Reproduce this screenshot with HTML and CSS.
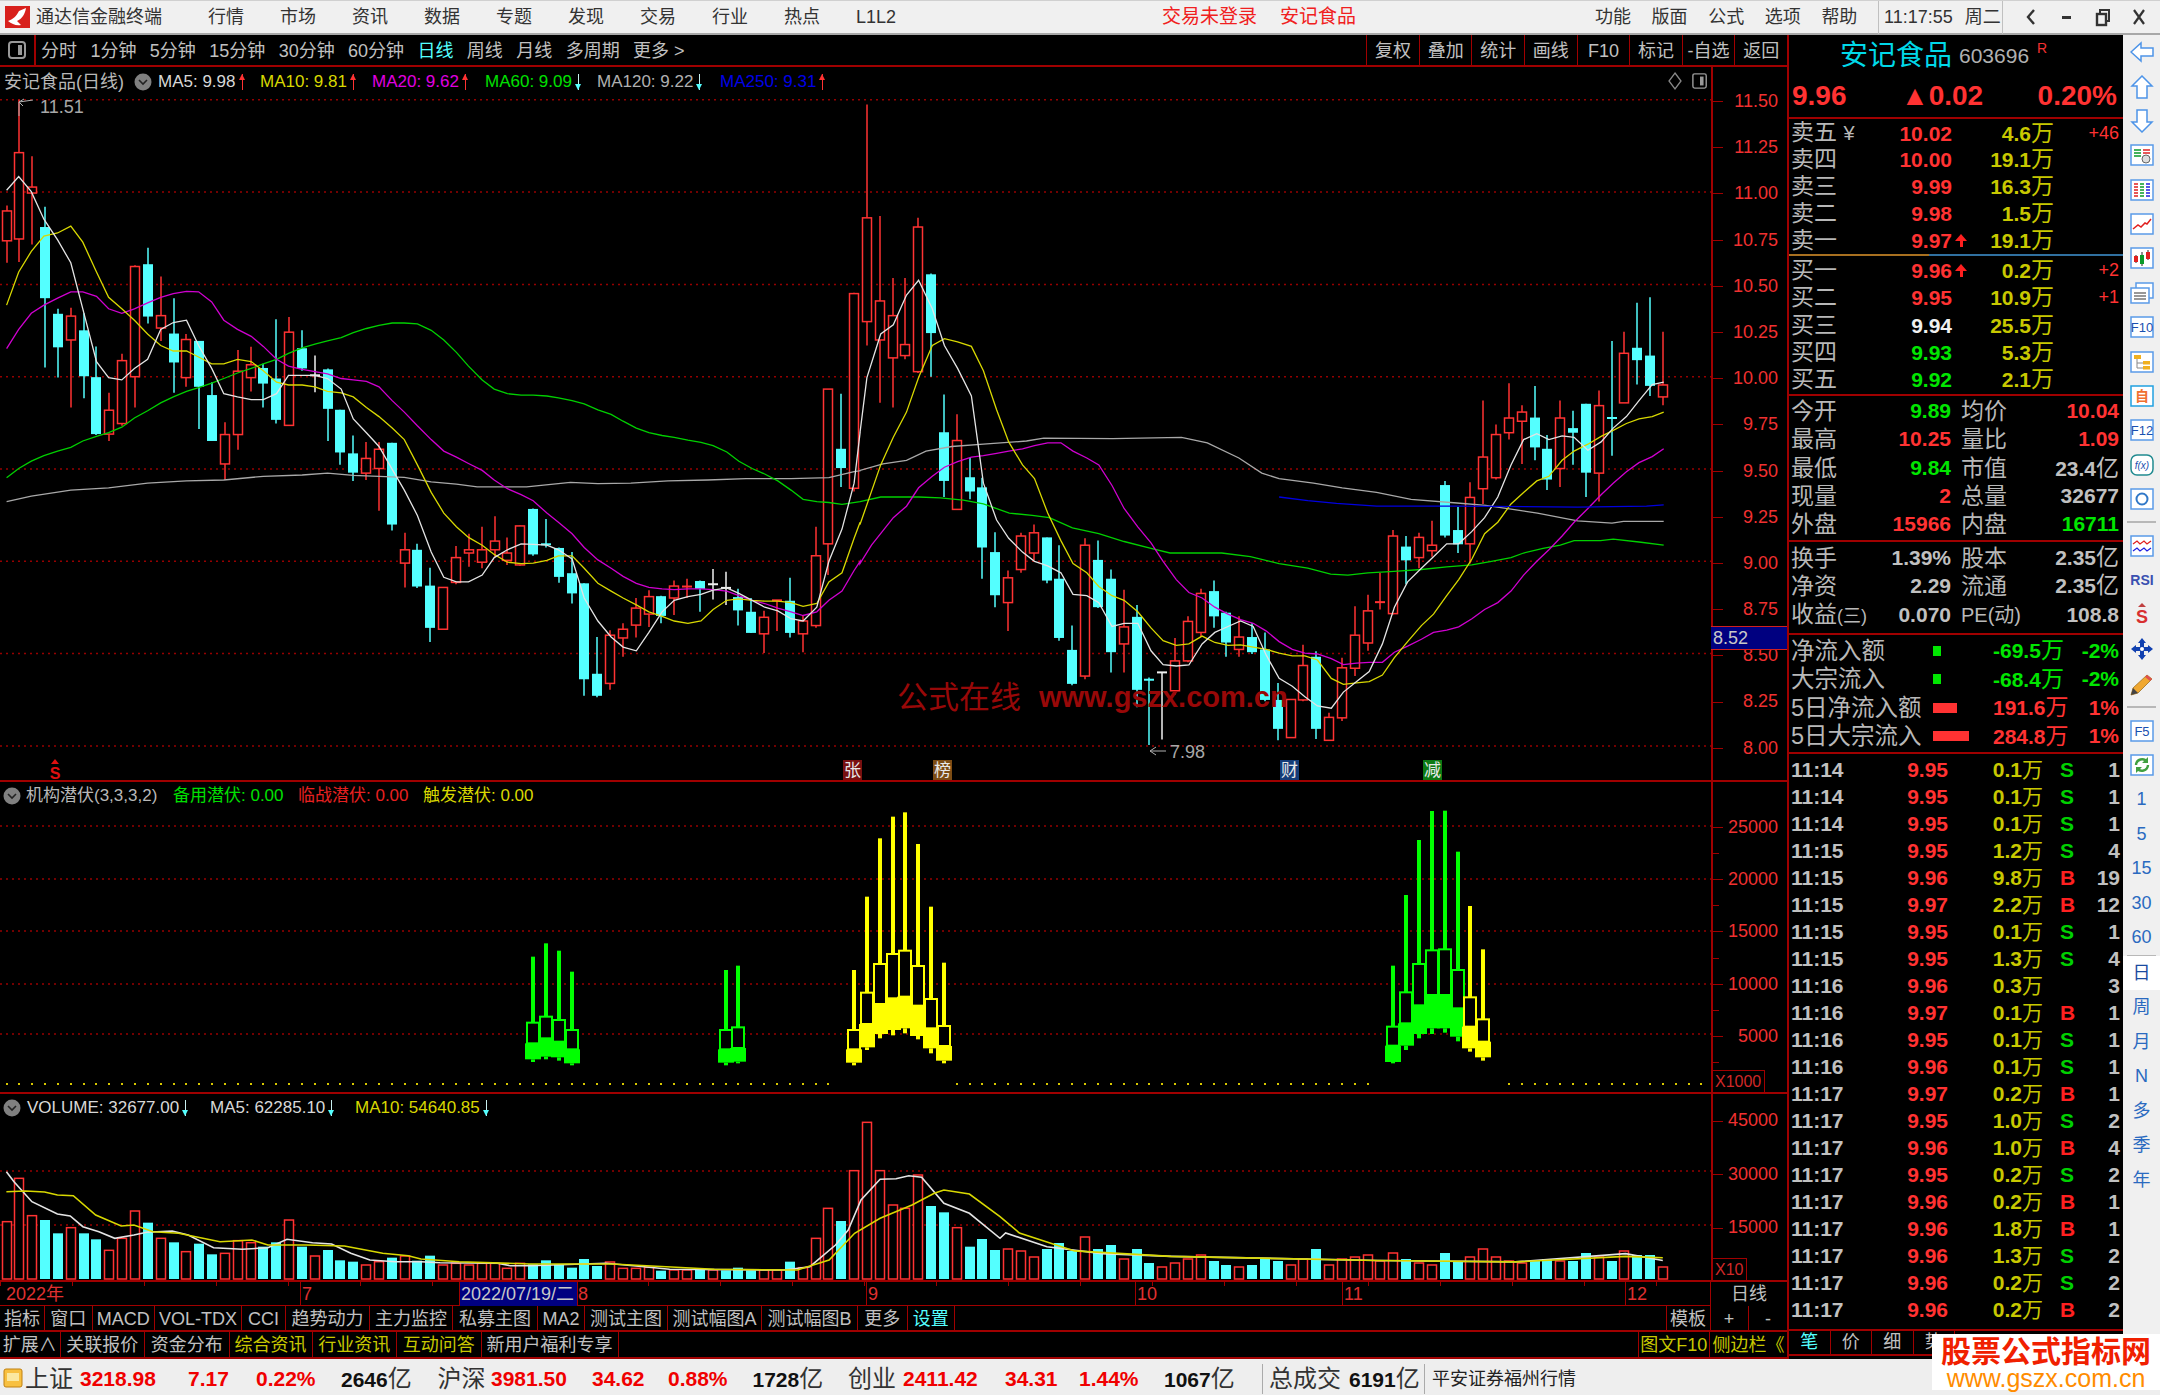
FILE: index.html
```html
<!DOCTYPE html>
<html lang="zh">
<head>
<meta charset="utf-8">
<title>通达信金融终端</title>
<link rel="stylesheet" href="styles.css">
</head>
<body>
<header class="titlebar">
  <svg class="logo" viewBox="0 0 25 22"><rect width="25" height="22" fill="#d8201c"/><path d="M3 15 C8 13 11 11 14 5 L21 2 C20 8 17 13 12 15 L16 19 C11 20 7 18 3 15Z" fill="#fff"/></svg>
  <span class="appname">通达信金融终端</span>
  <nav class="menu"><span>行情</span><span>市场</span><span>资讯</span><span>数据</span><span>专题</span><span>发现</span><span>交易</span><span>行业</span><span>热点</span><span>L1L2</span></nav>
  <span class="notice first">交易未登录</span><span class="notice">安记食品</span>
  <nav class="menu2"><span>功能</span><span>版面</span><span>公式</span><span>选项</span><span>帮助</span></nav>
  <span class="clock">11:17:55<span class="clock-day">周二</span></span>
  <span class="winbtns">
    <svg viewBox="0 0 16 20"><path d="M11 3 L5 10 L11 17" fill="none" stroke="#333" stroke-width="2.4"/></svg>
    <svg viewBox="0 0 16 20"><rect x="3" y="9" width="9" height="3" fill="#333"/></svg>
    <svg viewBox="0 0 16 20"><rect x="5" y="3" width="9" height="11" fill="none" stroke="#333" stroke-width="2"/><rect x="2" y="7" width="9" height="11" fill="#f0f0f0" stroke="#333" stroke-width="2.4"/></svg>
    <svg viewBox="0 0 16 20"><path d="M3 3 L13 17 M13 3 L3 17" stroke="#333" stroke-width="2.2"/></svg>
  </span>
</header>

<main class="main">
  <section class="left">
    <div class="toolbar">
      <span class="tool-icon"><svg viewBox="0 0 20 20"><rect x="2" y="2" width="16" height="16" rx="3" fill="none" stroke="#999" stroke-width="2"/><rect x="11" y="5" width="4" height="10" fill="#999"/></svg></span>
      <div class="periods"><span>分时</span><span>1分钟</span><span>5分钟</span><span>15分钟</span><span>30分钟</span><span>60分钟</span><span class="cyan">日线</span><span>周线</span><span>月线</span><span>多周期</span><span>更多 &gt;</span></div>
      <div class="toolbtns"><span>复权</span><span>叠加</span><span>统计</span><span>画线</span><span>F10</span><span>标记</span><span>-自选</span><span>返回</span></div>
    </div>

    <div class="pane pane-main">
      <div class="plot">
        <svg id="chart-main" class="chart" viewBox="0 67 1711 715"></svg>
        <div class="legend legend-main">
          <span class="gray name">安记食品(日线)</span>
          <svg class="drop" viewBox="0 0 18 18"><circle cx="9" cy="9" r="8.5" fill="#808080"/><path d="M5 7 L9 11 L13 7" fill="none" stroke="#222" stroke-width="1.6"/></svg>
          <span class="lwhite">MA5: 9.98<i class="up"></i></span>
          <span class="lyellow">MA10: 9.81<i class="up"></i></span>
          <span class="lmag">MA20: 9.62<i class="up"></i></span>
          <span class="lgreen">MA60: 9.09<i class="down"></i></span>
          <span class="lgray">MA120: 9.22<i class="down"></i></span>
          <span class="lblue">MA250: 9.31<i class="up"></i></span>
        </div>
        <div class="plot-tools">
          <svg viewBox="0 0 14 20"><path d="M7 2 L13 10 L7 18 L1 10Z" fill="none" stroke="#888" stroke-width="1.3"/></svg>
          <svg viewBox="0 0 18 20"><rect x="1" y="2" width="15" height="16" rx="2" fill="none" stroke="#999" stroke-width="1.6"/><rect x="9" y="5" width="4" height="10" fill="#999"/></svg>
        </div>
      </div>
      <ul class="axis axis-main"><li>11.50</li><li>11.25</li><li>11.00</li><li>10.75</li><li>10.50</li><li>10.25</li><li>10.00</li><li>9.75</li><li>9.50</li><li>9.25</li><li>9.00</li><li>8.75</li><li>8.50</li><li>8.25</li><li>8.00</li></ul>
      <span class="pricetag">8.52</span>
    </div>

    <div class="pane pane-ind">
      <div class="plot">
        <svg id="chart-ind" class="chart" viewBox="0 782 1711 312"></svg>
        <div class="legend legend-ind">
          <svg class="drop" viewBox="0 0 18 18"><circle cx="9" cy="9" r="8.5" fill="#808080"/><path d="M5 7 L9 11 L13 7" fill="none" stroke="#222" stroke-width="1.6"/></svg>
          <span class="gray">机构潜伏(3,3,3,2)</span>
          <span class="lgreen">备用潜伏: 0.00</span>
          <span class="lred">临战潜伏: 0.00</span>
          <span class="lyellow">触发潜伏: 0.00</span>
        </div>
      </div>
      <ul class="axis axis-ind"><li>25000</li><li>20000</li><li>15000</li><li>10000</li><li>5000</li></ul>
      <span class="unit unit-1000">X1000</span>
    </div>

    <div class="pane pane-vol">
      <div class="plot">
        <svg id="chart-vol" class="chart" viewBox="0 1094 1711 186"></svg>
        <div class="legend legend-vol">
          <svg class="drop" viewBox="0 0 18 18"><circle cx="9" cy="9" r="8.5" fill="#808080"/><path d="M5 7 L9 11 L13 7" fill="none" stroke="#222" stroke-width="1.6"/></svg>
          <span class="lwhite">VOLUME: 32677.00<i class="down"></i></span>
          <span class="lwhite">MA5: 62285.10<i class="down"></i></span>
          <span class="lyellow">MA10: 54640.85<i class="down"></i></span>
        </div>
      </div>
      <ul class="axis axis-vol"><li>45000</li><li>30000</li><li>15000</li></ul>
      <span class="unit unit-10">X10</span>
    </div>

    <div class="timeaxis">
      <span class="t-first">2022年</span><span>7</span><span class="t-date">2022/07/19/二</span><span class="t-cut">8</span><span>9</span><span>10</span><span>11</span><span>12</span><span class="t-cell">日线</span>
    </div>
    <div class="btnrow row1">
      <span>指标</span><span>窗口</span><span>MACD</span><span>VOL-TDX</span><span>CCI</span><span>趋势动力</span><span>主力监控</span><span>私募主图</span><span>MA2</span><span>测试主图</span><span>测试幅图A</span><span>测试幅图B</span><span>更多</span><span class="cyan">设置</span>
      <em></em><span class="c-left">模板</span><span>+</span><span>-</span>
    </div>
    <div class="btnrow row2">
      <span>扩展∧</span><span>关联报价</span><span>资金分布</span><span class="olive">综合资讯</span><span class="olive">行业资讯</span><span class="olive">互动问答</span><span>新用户福利专享</span>
      <em></em><span class="olive c-left">图文F10</span><span class="olive">侧边栏《</span>
    </div>
  </section>

  <aside class="quote">
    <div class="q-head">
      <div class="q-title"><span class="q-name">安记食品</span><span class="q-code">603696</span><sup class="q-r">R</sup></div>
      <div class="q-price"><span>9.96</span><span>▲0.02</span><span>0.20%</span></div>
    </div>
    <div class="book sell">
      <div class="b-row"><span class="lab">卖五 <small>¥</small></span><span class="red">10.02</span><i></i><span class="vol">4.6<u>万</u></span><span class="red delta">+46</span></div>
      <div class="b-row"><span class="lab">卖四</span><span class="red">10.00</span><i></i><span class="vol">19.1<u>万</u></span><span></span></div>
      <div class="b-row"><span class="lab">卖三</span><span class="red">9.99</span><i></i><span class="vol">16.3<u>万</u></span><span></span></div>
      <div class="b-row"><span class="lab">卖二</span><span class="red">9.98</span><i></i><span class="vol">1.5<u>万</u></span><span></span></div>
      <div class="b-row"><span class="lab">卖一</span><span class="red">9.97</span><i class="barrow"></i><span class="vol">19.1<u>万</u></span><span></span></div>
    </div>
    <div class="book-div"></div>
    <div class="book buy">
      <div class="b-row"><span class="lab">买一</span><span class="red">9.96</span><i class="barrow"></i><span class="vol">0.2<u>万</u></span><span class="red delta">+2</span></div>
      <div class="b-row"><span class="lab">买二</span><span class="red">9.95</span><i></i><span class="vol">10.9<u>万</u></span><span class="red delta">+1</span></div>
      <div class="b-row"><span class="lab">买三</span><span class="white">9.94</span><i></i><span class="vol">25.5<u>万</u></span><span></span></div>
      <div class="b-row"><span class="lab">买四</span><span class="green">9.93</span><i></i><span class="vol">5.3<u>万</u></span><span></span></div>
      <div class="b-row"><span class="lab">买五</span><span class="green">9.92</span><i></i><span class="vol">2.1<u>万</u></span><span></span></div>
    </div>
    <div class="stats">
      <div class="s-row"><span class="lab">今开</span><span class="green">9.89</span><span class="lab">均价</span><span class="red">10.04</span></div>
      <div class="s-row"><span class="lab">最高</span><span class="red">10.25</span><span class="lab">量比</span><span class="red">1.09</span></div>
      <div class="s-row"><span class="lab">最低</span><span class="green">9.84</span><span class="lab">市值</span><span class="gr">23.4<u>亿</u></span></div>
      <div class="s-row"><span class="lab">现量</span><span class="red">2</span><span class="lab">总量</span><span class="gr">32677</span></div>
      <div class="s-row"><span class="lab">外盘</span><span class="red">15966</span><span class="lab">内盘</span><span class="green">16711</span></div>
    </div>
    <div class="stats stats2">
      <div class="s-row"><span class="lab">换手</span><span class="gr">1.39%</span><span class="lab">股本</span><span class="gr">2.35<u>亿</u></span></div>
      <div class="s-row"><span class="lab">净资</span><span class="gr">2.29</span><span class="lab">流通</span><span class="gr">2.35<u>亿</u></span></div>
      <div class="s-row"><span class="lab">收益<small class="paren">(三)</small></span><span class="gr">0.070</span><span class="lab pe">PE(动)</span><span class="gr">108.8</span></div>
    </div>
    <div class="flow">
      <div class="f-row"><span class="lab">净流入额</span><b class="bar-s"></b><span class="green">-69.5<u>万</u></span><span class="green">-2%</span></div>
      <div class="f-row"><span class="lab">大宗流入</span><b class="bar-s"></b><span class="green">-68.4<u>万</u></span><span class="green">-2%</span></div>
      <div class="f-row"><span class="lab">5日净流入额</span><b class="bar-m"></b><span class="red">191.6<u>万</u></span><span class="red">1%</span></div>
      <div class="f-row"><span class="lab">5日大宗流入</span><b class="bar-l"></b><span class="red">284.8<u>万</u></span><span class="red">1%</span></div>
    </div>
    <div class="ticks" id="ticks"></div>
    <div class="qtabs"><span class="cyan">笔</span><span>价</span><span>细</span><span>势</span></div>
  </aside>

  <nav class="sidebar">
    <svg viewBox="0 0 24 24"><path d="M1 12 L11 3 L11 8 L23 8 L23 16 L11 16 L11 21Z" fill="#fff" stroke="#4d94e8" stroke-width="1.5"/></svg>
    <svg viewBox="0 0 24 24"><path d="M12 1 L22 11 L17 11 L17 23 L7 23 L7 11 L2 11Z" fill="#fff" stroke="#4d94e8" stroke-width="1.5"/></svg>
    <svg viewBox="0 0 24 24"><path d="M12 23 L22 13 L17 13 L17 1 L7 1 L7 13 L2 13Z" fill="#fff" stroke="#4d94e8" stroke-width="1.5"/></svg>
    <svg viewBox="0 0 24 24"><rect class="ib" x="1" y="2" width="22" height="20"/><path d="M4 7h7M4 10h7M4 13h7" stroke="#0a9a2a" stroke-width="1.5"/><path d="M13 7h7M13 10h7" stroke="#e02020" stroke-width="1.5"/><circle cx="16" cy="16" r="4" fill="#ddd" stroke="#666"/></svg>
    <svg viewBox="0 0 24 24"><rect class="ib" x="1" y="2" width="22" height="20"/><path d="M4 6h4M4 9h4M4 12h4M4 15h4M4 18h4" stroke="#e02020" stroke-width="1.5"/><path d="M10 6h4M10 9h4M10 12h4M10 15h4M10 18h4" stroke="#0a9a2a" stroke-width="1.5"/><path d="M16 6h4M16 9h4M16 12h4M16 15h4M16 18h4" stroke="#2020e0" stroke-width="1.5"/></svg>
    <svg viewBox="0 0 24 24"><rect class="ib" x="1" y="2" width="22" height="20"/><path d="M3 17 L8 13 L11 15 L15 11 L17 12 L21 7" fill="none" stroke="#e02020" stroke-width="1.5"/></svg>
    <svg viewBox="0 0 24 24"><rect class="ib" x="1" y="2" width="22" height="20"/><path d="M6 9v8M12 6v14M18 4v10" stroke="#222" stroke-width="1"/><rect x="4" y="10" width="4" height="6" fill="#e02020"/><rect x="10" y="9" width="4" height="9" fill="#0a9a2a"/><rect x="16" y="6" width="4" height="7" fill="#e02020"/></svg>
    <svg viewBox="0 0 24 24"><rect x="6" y="2" width="17" height="15" fill="#fff" stroke="#5a9ae8" stroke-width="1.5"/><rect class="ib" x="1" y="7" width="18" height="15"/><path d="M4 12h12M4 15h12M4 18h12" stroke="#777" stroke-width="1.4"/></svg>
    <svg viewBox="0 0 24 24"><rect class="ib" x="1" y="2" width="22" height="20"/><text x="12" y="17" class="ifont">F10</text></svg>
    <svg viewBox="0 0 24 24"><rect class="ib" x="1" y="2" width="22" height="20"/><rect x="4" y="5" width="7" height="4" fill="#f0b020"/><path d="M7 9v9h6M7 13h6" fill="none" stroke="#888"/><rect x="13" y="11" width="7" height="3.5" fill="#f0b020"/><rect x="13" y="16" width="7" height="3.5" fill="#f0b020"/></svg>
    <svg viewBox="0 0 24 24"><rect x="1" y="2" width="22" height="20" fill="#fff" stroke="#20a0e0" stroke-width="1.5"/><text x="12" y="17" class="ifont ifont-o">自</text></svg>
    <svg viewBox="0 0 24 24"><rect class="ib" x="1" y="2" width="22" height="20"/><text x="12" y="17" class="ifont">F12</text></svg>
    <svg viewBox="0 0 24 24"><rect x="1" y="2" width="22" height="20" rx="6" fill="#fff" stroke="#208a90" stroke-width="1.5"/><text x="12" y="16" class="ifont ifont-f">f(x)</text></svg>
    <svg viewBox="0 0 24 24"><rect class="ib" x="1" y="2" width="22" height="20"/><circle cx="12" cy="12" r="5.5" fill="none" stroke="#3078c8" stroke-width="2"/></svg>
    <hr>
    <svg viewBox="0 0 24 24"><rect class="ib" x="1" y="2" width="22" height="20"/><path d="M3 10 L7 7 L10 10 L14 7 L17 10 L21 7" fill="none" stroke="#e02020" stroke-width="1.3"/><path d="M3 17 L7 14 L10 17 L14 14 L17 17 L21 14" fill="none" stroke="#2020e0" stroke-width="1.3"/></svg>
    <svg viewBox="0 0 24 24"><text x="12" y="17" class="ifont ifont-rsi">RSI</text></svg>
    <svg viewBox="0 0 24 24"><path d="M12 0 L16 4 H8Z" fill="#c04040"/><text x="12" y="20" class="ifont ifont-s">S</text></svg>
    <svg viewBox="0 0 24 24"><path d="M12 1 L16 6 H14 V10 H18 V8 L23 12 L18 16 V14 H14 V18 H16 L12 23 L8 18 H10 V14 H6 V16 L1 12 L6 8 V10 H10 V6 H8Z" fill="#1040b0"/><circle cx="12" cy="12" r="2" fill="#fff"/></svg>
    <svg viewBox="0 0 24 24"><path d="M1 23 L3 16 L17 3 L22 7 L8 21Z" fill="#f0a830" stroke="#a07020" stroke-width=".8"/><path d="M17 3 L22 7 L20 9 L15 5Z" fill="#e05050"/><path d="M1 23 L3 16 L8 21Z" fill="#444"/></svg>
    <hr>
    <svg viewBox="0 0 24 24"><rect class="ib" x="1" y="2" width="22" height="20"/><text x="12" y="17" class="ifont">F5</text></svg>
    <svg viewBox="0 0 24 24"><rect class="ib" x="1" y="2" width="22" height="20"/><path d="M6 12 A6 6 0 0 1 17 9 M18 12 A6 6 0 0 1 7 15" fill="none" stroke="#40a040" stroke-width="2.4"/><path d="M18 4 V10 H12Z M6 20 V14 H12Z" fill="#40a040"/></svg>
    <span>1</span><span>5</span><span>15</span><span>30</span><span>60</span>
    <hr class="thin">
    <span class="active">日</span><span>周</span><span>月</span><span>N</span><span>多</span><span>季</span><span>年</span>
  </nav>
</main>

<footer class="status">
  <svg class="st-icon" viewBox="0 0 20 20"><rect x="1" y="1" width="18" height="18" rx="2" fill="#f8c040" stroke="#c08010"/><rect x="4" y="5" width="12" height="8" fill="#fbe8a0"/></svg>
  <span class="st-lab">上证</span><span class="st-red">3218.98</span><span class="st-red">7.17</span><span class="st-red">0.22%</span><span class="st-amt">2646<u>亿</u></span>
  <span class="st-lab">沪深</span><span class="st-red">3981.50</span><span class="st-red">34.62</span><span class="st-red">0.88%</span><span class="st-amt">1728<u>亿</u></span>
  <span class="st-lab">创业</span><span class="st-red">2411.42</span><span class="st-red">34.31</span><span class="st-red">1.44%</span><span class="st-amt">1067<u>亿</u></span>
  <span class="st-lab st-sep">总成交</span><span class="st-amt">6191<u>亿</u></span><span class="st-broker">平安证券福州行情</span>
</footer>

<aside class="stamp"><strong>股票公式指标网</strong><span>www.gszx.com.cn</span></aside>
<script src="chart.js"></script>
</body>
</html>
```

FILE: styles.css
```css
* { box-sizing: border-box; }
html, body { margin: 0; padding: 0; }
body {
  position: relative;
  width: 2160px;
  height: 1395px;
  overflow: hidden;
  background: #000;
  color: #c0c0c0;
  font-family: "Liberation Sans", "Noto Sans CJK SC", sans-serif;
  font-size: 18px;
}
u { text-decoration: none; font-weight: 400; }
i { font-style: normal; }
.cyan { color: #54ffff; }
.olive { color: #c8c800; }

/* title bar */
.titlebar {
  height: 35px;
  display: flex;
  align-items: center;
  background: #f0f0f0;
  border-top: 1px solid #d0d0d0;
  border-bottom: 2px solid #a8a8a8;
  color: #333;
  font-size: 18px;
  line-height: 32px;
}
.logo { width: 25px; height: 22px; margin-left: 5px; }
.appname { margin-left: 6px; width: 172px; }
.menu { display: flex; width: 954px; }
.menu span { width: 72px; }
.notice { color: #f02020; font-size: 19px; width: 122px; }
.notice.first { width: 118px; }
.notice + .notice { width: 315px; }
.menu2 { display: flex; width: 283px; }
.menu2 span { width: 57px; }
.clock {
  display: flex;
  align-items: center;
  height: 33px;
  width: 125px;
  padding-left: 5px;
  border-left: 1px solid #c0c0c0;
  border-right: 1px solid #c0c0c0;
  font-size: 18px;
  white-space: nowrap;
}
.clock-day { margin-left: 12px; font-size: 18px; }
.winbtns { display: flex; gap: 20px; margin-left: 20px; }
.winbtns svg { width: 16px; height: 20px; }

/* layout */
.main { display: flex; height: 1324px; }
.left { width: 1787px; display: flex; flex-direction: column; }

.toolbar {
  height: 32px;
  display: flex;
  align-items: center;
  border-bottom: 2px solid #a00000;
  line-height: 28px;
}
.tool-icon {
  width: 36px; height: 30px;
  display: flex; align-items: center; justify-content: center;
  border-right: 2px solid #a00000;
}
.tool-icon svg { width: 20px; height: 20px; }
.periods { display: flex; gap: 13.4px; margin-left: 5px; padding-top: 2px; }
.toolbtns { display: flex; margin-left: auto; }
.toolbtns span {
  width: 52.6px; height: 30px;
  padding-top: 2px;
  text-align: center;
  border-left: 1px solid #a00000;
}

/* panes */
.pane { position: relative; display: flex; border-bottom: 2px solid #a00000; }
.pane-main { height: 715px; }
.pane-ind { height: 312px; }
.pane-vol { height: 188px; }
.plot { position: relative; width: 1711px; }
.chart { position: absolute; left: 0; top: 0; width: 1711px; display: block; }
.pane-main .chart { height: 715px; }
.pane-ind .chart { height: 312px; }
.pane-vol .chart { height: 186px; }

.legend {
  position: absolute;
  left: 0;
  display: grid;
  align-items: center;
  white-space: nowrap;
  font-size: 17px;
  line-height: 22px;
}
.legend-main { top: 4px; padding-left: 4px; grid-template-columns: 130px 24px 102px 112px 113px 112px 123px auto; }
.legend-ind { top: 3px; padding-left: 3px; grid-template-columns: 23px 147px 125px 125px auto; }
.legend-vol { top: 3px; padding-left: 3px; grid-template-columns: 24px 183px 145px auto; }
.name { font-size: 18px; }
.gray { color: #b8b8b8; }
.drop { width: 18px; height: 18px; display: block; }
.lwhite { color: #d8d8d8; }
.lyellow { color: #d8d800; }
.lmag { color: #e000e0; }
.lgreen { color: #00e000; }
.lgray { color: #b0b0b0; }
.lblue { color: #0000e8; }
.lred { color: #e82020; }

/* trend arrows beside the moving-average values */
.up, .down {
  position: relative;
  display: inline-block;
  width: 7px;
  height: 16px;
  margin-left: 3px;
  vertical-align: -3px;
}
.up::before, .down::before {
  content: "";
  position: absolute;
  left: 3px; top: 0;
  width: 1px; height: 16px;
}
.up::after, .down::after {
  content: "";
  position: absolute;
  left: 0;
  border-left: 3.5px solid transparent;
  border-right: 3.5px solid transparent;
}
.up::before { background: #ff3232; }
.up::after { top: 0; border-bottom: 6px solid #ff3232; }
.down::before { background: #c8f0f0; }
.down::after { bottom: 0; border-top: 6px solid #54ffff; }

.plot-tools { position: absolute; right: 3px; top: 4px; display: flex; gap: 9px; }
.plot-tools svg { height: 20px; width: 16px; }

.axis {
  list-style: none;
  margin: 0;
  padding: 0 9px 0 0;
  width: 76px;
  border-left: 2px solid #a00000;
  color: #f03030;
  text-align: right;
}
.axis li { position: relative; }
.axis li::before {
  content: "";
  position: absolute;
  left: 0; top: 50%;
  width: 10px; height: 1px;
  background: #a00000;
}
.axis-main { padding-top: 11px; }
.axis-main li { height: 46.2px; line-height: 46.2px; }
.axis-ind { padding-top: 19px; }
.axis-ind li { height: 52.2px; line-height: 52.2px; }
.axis-ind li::after {
  content: "";
  position: absolute;
  left: 0; top: 100%;
  width: 6px; height: 1px;
  background: #a00000;
}
.axis-vol li { height: 53.5px; line-height: 53.5px; }
.pricetag {
  position: absolute;
  left: 1711px; top: 559px;
  width: 76px; height: 24px;
  padding-left: 2px;
  background: #000080;
  border-top: 1px solid #d02020;
  border-bottom: 1px solid #d02020;
  color: #c8c8c8;
  line-height: 22px;
}
.unit {
  position: absolute;
  bottom: 0;
  left: 1711px;
  height: 22px;
  padding: 0 3px;
  border: 1px solid #a00000;
  border-bottom: 0;
  color: #d02828;
  font-size: 16px;
  line-height: 22px;
}

/* time axis and button rows */
.timeaxis {
  height: 24px;
  display: grid;
  grid-template-columns: 300px 159px 118px 289px 269px 207px 283px 85px 77px;
  border-bottom: 1px solid #a00000;
  color: #e03030;
  line-height: 23px;
  background: repeating-linear-gradient(90deg, #a00000 0 1px, transparent 1px 72px) top left / 100% 4px no-repeat;
}
.timeaxis span { padding-left: 1px; padding-top: 1px; border-left: 1px solid #a00000; }
.timeaxis .t-first { border-left: 0; padding-left: 6px; }
.t-date { background: #000080; color: #c8c8c8; white-space: nowrap; overflow: hidden; }
.timeaxis .t-cut { padding-left: 0; }
.timeaxis .t-cell { background: #000; color: #c0c0c0; text-align: center; padding-left: 0; }

.btnrow { display: grid; text-align: center; white-space: nowrap; border-bottom: 2px solid #a00000; }
.btnrow span { border-right: 1px solid #a00000; padding-top: 2px; }
.row1 {
  height: 26px; line-height: 22px;
  grid-template-columns: 45px 47.5px 62.5px 87px 44px 84px 83px 85px 47px 83px 94px 96px 49.5px 47.5px 710.5px 45px 38px 39px;
}
.row2 {
  height: 27px; line-height: 23px;
  grid-template-columns: 60.6px 84.4px 84.6px 83px 84.5px 84.5px 137px 1019px 72.4px 77px;
}
.btnrow em { border-right: 0; }
.c-left { border-left: 1px solid #a00000; }
.btnrow span:last-child { border-right: 0; }

/* quote panel */
.quote {
  width: 336px;
  display: flex;
  flex-direction: column;
  border-left: 2px solid #a00000;
}
.q-head { height: 84px; border-bottom: 2px solid #a00000; }
.q-title { height: 41px; display: flex; align-items: center; padding-left: 51px; }
.q-name { color: #00d8e8; font-size: 28px; line-height: 40px; }
.q-code { color: #b0b0b0; font-size: 21px; margin-left: 7px; }
.q-r { color: #f03030; font-size: 14px; margin: -16px 0 0 8px; }
.q-price {
  display: flex;
  justify-content: space-between;
  padding: 0 6px 0 3px;
  color: #ff3232;
  font-size: 28px;
  font-weight: 700;
  line-height: 40px;
}
.red { color: #ff3232; font-weight: 700; }
.green { color: #00e600; font-weight: 700; }
.white { color: #f0f0f0; font-weight: 700; }
.gr { color: #c0c0c0; font-weight: 700; }
.lab { color: #b8b8b8; font-size: 23px; white-space: nowrap; font-weight: 400; }
.lab small { font-size: 20px; }
.lab small.paren { font-size: 18px; }

.book { font-size: 21px; }
.sell { height: 135px; }
.buy { height: 138px; padding-top: 1px; }
.book-div { height: 2px; background: linear-gradient(90deg, #a87020 0 140px, #3070a0 140px); }
.b-row {
  height: 27.3px;
  display: grid;
  grid-template-columns: 62px 99px 18px 84px 65px;
  align-items: center;
  padding-left: 2px;
  line-height: 27px;
}
.sell .b-row { height: 27px; }
.b-row > span:nth-child(2) { text-align: right; }
.barrow { position: relative; height: 14px; }
.barrow::before {
  content: "";
  position: absolute;
  left: 3px; top: 0;
  border-left: 6px solid transparent;
  border-right: 6px solid transparent;
  border-bottom: 7px solid #ff2020;
}
.barrow::after {
  content: "";
  position: absolute;
  left: 7.5px; top: 6px;
  width: 3px; height: 7px;
  background: #ff2020;
}
.vol { color: #c8c800; text-align: right; white-space: nowrap; font-weight: 700; }
.vol u { font-size: 23px; }
.delta { text-align: right; font-size: 18px; font-weight: 400; }

.stats { height: 146px; border-top: 2px solid #a00000; font-size: 21px; padding-top: 1px; line-height: 28px; }
.stats2 { height: 93px; }
.s-row {
  height: 28.3px;
  display: grid;
  grid-template-columns: 160px 10px 72px 86px;
  align-items: center;
  padding-left: 2px;
}
.s-row > span:nth-child(1) { grid-column: 1; grid-row: 1; }
.s-row > span:nth-child(2) { grid-column: 1; grid-row: 1; text-align: right; }
.s-row > span:nth-child(3) { grid-column: 3; grid-row: 1; }
.s-row > span:nth-child(4) { grid-column: 3 / 5; grid-row: 1; text-align: right; }
.s-row u { font-size: 23px; }
.lab.pe { font-size: 20px; }

.flow { height: 119px; border-top: 2px solid #a00000; font-size: 21px; padding-top: 1px; line-height: 28px; }
.f-row {
  height: 28.6px;
  display: grid;
  grid-template-columns: 142px 60px 64px 62px;
  align-items: center;
  padding-left: 2px;
}
.f-row .lab { font-size: 23.5px; }
.f-row > span:nth-child(3) { text-align: right; white-space: nowrap; }
.f-row > span:nth-child(4) { text-align: right; }
.f-row u { font-size: 23px; }
.bar-s, .bar-m, .bar-l { height: 10px; display: block; }
.bar-s { width: 8px; background: #00e600; }
.bar-m { width: 24px; background: #ff3232; }
.bar-l { width: 36px; background: #ff3232; }

.ticks { height: 577px; border-top: 2px solid #a00000; padding-top: 2px; font-size: 21px; }
.t-row {
  height: 27px;
  display: grid;
  grid-template-columns: 60px 97px 95px 30px 47px;
  align-items: center;
  padding-left: 2px;
  line-height: 27px;
  font-weight: 700;
}
.t-row span:nth-child(2), .t-row span:nth-child(3), .t-row span:nth-child(5) { text-align: right; }
.t-row span:nth-child(3) { color: #c8c800; white-space: nowrap; }
.t-row span:nth-child(4) { padding-left: 17px; }
.t-s { color: #00d000; }
.t-b { color: #ff2020; }
.qtabs {
  height: 27px;
  display: flex;
  border-top: 2px solid #a00000;
  border-bottom: 2px solid #a00000;
  line-height: 23px;
}
.qtabs span { width: 41.5px; text-align: center; border-right: 1px solid #a00000; }

/* right icon column */
.sidebar {
  width: 37px;
  display: flex;
  flex-direction: column;
  align-items: center;
  background: #f0f0f0;
  color: #2a6ac0;
  font-size: 18px;
}
.sidebar svg { width: 24px; height: 24px; margin: 5.2px 0; flex: none; }
.sidebar span { height: 34.5px; line-height: 34.5px; flex: none; width: 100%; text-align: center; }
.sidebar .active { background: #fff; color: #1a4aa0; }
.sidebar hr { width: 29px; height: 2px; margin: 5px 0 5.6px; border: 0; background: #b8b8b8; flex: none; }
.sidebar hr.thin { height: 1px; margin: 0; }
.ib { fill: #fff; stroke: #5a9ae8; stroke-width: 1.5; }
.ifont { font-family: "Liberation Sans", sans-serif; font-size: 13px; fill: #1a50b0; text-anchor: middle; }
.ifont-o { font-family: "Noto Sans CJK SC", sans-serif; font-size: 14px; fill: #f07030; font-weight: 700; }
.ifont-f { font-size: 10px; font-style: italic; }
.ifont-rsi { font-size: 14px; font-weight: 700; fill: #3a50b0; }
.ifont-s { font-size: 18px; font-weight: 700; fill: #d83030; }

/* status bar */
.status {
  height: 36px;
  display: grid;
  grid-template-columns: 25px 55px 108px 68px 85px 96.5px 53.5px 101px 76px 84.5px 95.5px 55px 102px 74px 85px 98px 87px 75px auto;
  align-items: center;
  background: #eeeeee;
  color: #222;
  font-size: 21px;
  white-space: nowrap;
  line-height: 30px;
  padding-top: 4px;
}
.st-icon { width: 20px; height: 20px; margin-left: 3px; margin-top: -2px; }
.st-lab { font-size: 24px; color: #333; }
.st-red { color: #f00000; font-weight: 700; }
.st-amt { color: #111; font-weight: 700; }
.st-amt u { font-size: 24px; font-weight: 400; color: #333; }
.st-sep { border-left: 1px solid #aaa; padding-left: 6px; }
.st-broker { font-size: 18px; border-left: 1px solid #aaa; padding-left: 7px; }

/* watermark box */
.stamp {
  position: absolute;
  left: 1932px; top: 1334px;
  width: 228px; height: 56px;
  padding-top: 2px;
  background: #fff;
  display: flex;
  flex-direction: column;
  align-items: center;
}
.stamp strong { color: #f02000; font-size: 30px; line-height: 31px; }
.stamp span { color: #ff8c00; font-size: 25px; line-height: 23px; white-space: nowrap; }

/* svg text */
.wm-cn { font-family: "Noto Sans CJK SC", serif; font-size: 31px; fill: #980808; }
.wm-en { font-family: "Liberation Sans", sans-serif; font-size: 29px; font-weight: 700; fill: #980808; }
.price-note { font-family: "Liberation Sans", sans-serif; font-size: 18px; fill: #a8a8a8; }
.badge { font-family: "Noto Sans CJK SC", sans-serif; font-size: 17px; fill: #e8e8e8; text-anchor: middle; }
.s-mark { font-family: "Liberation Sans", sans-serif; font-size: 16px; font-weight: 700; fill: #e01010; text-anchor: middle; }
```

FILE: chart.js
```js
(function () {
  var RED = '#ff3232', CYAN = '#54ffff', GRID = '#960000';
  var cx = function (i) { return Math.round(6.6 + 12.84 * i); };
  var Y = function (z) { return 70 + z / 2.178; };
  var X7 = function (x) { return x / 1.823; };
  var X8 = function (x) { return 860 + x / 1.742; };

  /* type, high, body top, body bottom, low */
  var K = [
    ['r',295,307,372,420],['r',65,180,368,418],['r',188,255,268,380],['c',298,342,497,648],['c',520,531,604,670],
    ['r',518,536,588,735],['c',530,567,667,715],['c',602,669,793,795],['r',703,741,793,808],['r',618,633,770,775],
    ['r',425,428,668,735],['c',387,423,537,552],['r',450,535,562,590],['c',497,574,637,703],['r',575,587,670,690],
    ['c',590,590,690,782],['c',680,708,808,808],['r',767,794,858,892],['r',610,656,794,827],['r',603,642,670,700],
    ['c',640,649,683,735],['c',543,672,762,770],['r',538,571,774,775],['c',567,606,650,655],['w',622,665,668,702],
    ['c',650,652,738,808],['c',740,740,833,860],['c',796,835,877,895],['r',810,846,878,893],['r',810,826,868,960],
    ['c',812,812,990,1003],['r',1008,1045,1074,1127],['c',1032,1045,1125,1128],['c',1084,1123,1215,1246],['r',1126,1127,1218,1218],
    ['r',1037,1062,1116,1120],['r',1010,1045,1052,1082],['r',995,1045,1072,1085],['r',972,1026,1045,1060],['r',1018,1052,1068,1078],
    ['r',992,993,1078,1080],['c',955,956,1055,1058],['c',978,1033,1036,1040],['c',1040,1041,1104,1117],['c',1050,1096,1140,1162],
    ['c',1118,1118,1327,1363],['c',1235,1315,1363,1366],['r',1220,1231,1336,1350],['r',1205,1218,1237,1278],['r',1150,1172,1209,1236],
    ['r',1133,1147,1185,1213],['c',1145,1146,1189,1205],['r',1112,1124,1150,1187],['r',1108,1125,1130,1150],['c',1112,1113,1130,1180],
    ['w',1087,1120,1122,1153],['w',1093,1128,1131,1165],['c',1130,1148,1177,1210],['c',1150,1180,1226,1226],['r',1178,1192,1228,1270],
    ['r',1155,1155,1158,1222],['c',1106,1156,1226,1236],['r',1188,1200,1228,1268],['r',995,1058,1210,1215],['r',695,695,1032,1100],
    ['c',705,825,867,908],['r',485,487,911,918],['r',75,322,548,600],['r',318,503,588,725],['r',453,535,627,735],
    ['r',453,598,622,630],['r',322,342,657,660],['c',443,445,573,668],['c',707,789,895,930],['r',750,807,957,958],
    ['c',845,887,918,935],['c',888,909,1040,1108],['c',1007,1050,1144,1170],['r',1090,1106,1160,1222],['r',1008,1015,1088,1095],
    ['r',990,1008,1052,1068],['c',1018,1018,1112,1118],['c',1035,1108,1237,1243],['c',1210,1263,1337,1340],['r',1020,1035,1320,1327],
    ['c',1025,1067,1170,1172],['c',1088,1108,1268,1312],['r',1132,1213,1250,1312],['c',1165,1191,1350,1388],['c',1323,1328,1331,1470],
    ['w',1312,1312,1314,1458],['r',1237,1287,1352,1360],['r',1190,1201,1287,1290],['r',1130,1140,1225,1235],['c',1112,1135,1190,1215],
    ['c',1180,1182,1247,1278],['r',1190,1235,1262,1278],['c',1205,1235,1268,1272],['c',1225,1262,1372,1375],['c',1335,1372,1435,1460],
    ['r',1370,1371,1454,1455],['r',1252,1297,1372,1375],['c',1266,1278,1435,1457],['r',1400,1410,1460,1460],['r',1280,1302,1411,1418],
    ['r',1168,1231,1303,1320],['r',1143,1178,1248,1265],['r',1095,1159,1164,1175],['r',1002,1015,1184,1186],['c',1015,1038,1068,1120],
    ['r',1008,1018,1062,1085],['r',982,1035,1047,1060],['c',895,904,1014,1018],['c',952,1002,1033,1052],['r',898,931,1032,1075],
    ['r',720,843,912,945],['r',772,794,888,892],['r',682,758,790,805],['r',730,745,765,858],['c',688,757,822,850],
    ['c',795,825,892,915],['r',720,758,868,908],['c',742,780,790,860],['c',727,727,877,930],['r',698,731,878,940],
    ['c',590,758,763,840],['r',570,617,725,725],['c',507,605,632,685],['c',495,622,688,710],['r',570,686,712,730]
  ];

  var MA = [
    { color: '#a8a8a8', w7: [12,940,57,928,129,915,198,910,269,900,340,895,408,893,480,885,551,882,597,878,644,883,691,885,737,887,786,897,832,902,870,908,960,908,1000,903,1040,898,1090,901,1150,900,1218,895,1290,893,1360,890,1442,890,1511,888,1557,875,1568,873],
      w8: [0,872,40,858,81,850,115,830,160,820,215,815,290,808,320,802,440,803,560,800,605,812,660,845,700,878,730,890,790,900,840,910,900,920,960,935,1040,943,1090,948,1180,965,1250,982,1310,987,1330,983,1400,983] },
    { color: '#00d000', w7: [12,888,34,868,57,852,80,840,105,830,129,822,151,808,176,798,198,790,222,778,245,758,269,742,293,725,316,712,340,700,362,692,386,682,408,672,433,660,458,650,480,640,504,630,526,617,551,605,574,597,597,590,622,583,644,572,668,563,691,556,715,551,737,551,761,553,786,567,809,588,832,615,854,645,879,675,901,695,925,705,950,708,972,708,997,710,1018,714,1043,720,1065,727,1090,740,1114,750,1136,765,1160,780,1183,790,1207,796,1229,800,1254,806,1278,811,1300,818,1325,832,1347,852,1371,868,1394,880,1418,895,1442,915,1464,935,1489,940,1511,942,1535,946,1568,940],
      w8: [0,940,36,930,70,930,102,930,140,932,180,937,215,945,260,965,300,970,330,975,370,997,416,1010,460,1027,507,1042,540,1052,630,1052,680,1060,730,1075,780,1085,820,1098,850,1100,885,1095,930,1092,978,1088,1022,1082,1066,1078,1100,1070,1134,1062,1156,1052,1190,1042,1220,1035,1244,1025,1290,1025,1312,1022,1357,1028,1400,1035] },
    { color: '#d000d0', w7: [12,607,34,565,57,530,80,512,105,497,129,483,151,483,176,493,198,520,222,530,245,520,269,507,293,495,316,487,340,482,362,483,386,505,408,545,433,565,458,580,480,602,504,630,526,645,551,652,574,657,597,662,622,672,644,675,668,678,691,690,715,720,737,745,761,775,786,805,809,830,832,843,854,857,879,872,901,893,925,912,950,925,972,938,997,965,1018,985,1043,1010,1065,1040,1090,1067,1114,1085,1136,1103,1160,1118,1183,1127,1207,1130,1229,1132,1254,1130,1278,1130,1300,1132,1325,1135,1347,1145,1371,1155,1394,1162,1418,1172,1442,1180,1464,1188,1489,1180,1511,1155,1535,1135,1557,1090,1568,1070],
      w8: [0,1075,20,1035,58,975,81,950,102,910,126,885,147,865,170,853,194,843,215,840,238,835,259,830,283,825,304,818,327,812,350,812,371,830,395,845,416,860,439,905,460,955,484,995,507,1030,528,1070,551,1110,573,1138,596,1150,618,1170,641,1185,663,1197,685,1205,708,1222,730,1245,753,1262,775,1270,797,1272,821,1282,842,1295,865,1292,887,1290,910,1290,931,1268,954,1255,978,1240,999,1225,1022,1220,1043,1213,1066,1195,1088,1175,1111,1160,1134,1135,1156,1100,1179,1070,1200,1045,1223,1015,1244,985,1268,955,1291,925,1312,900,1335,875,1357,855,1380,842,1400,825] },
    { color: '#d8d800', w7: [12,512,34,440,57,395,80,362,105,355,129,340,151,375,176,440,198,495,222,520,245,545,269,575,293,600,316,612,340,612,362,625,386,640,408,640,433,630,458,635,480,655,504,680,526,686,551,686,574,690,597,700,622,703,644,712,668,735,691,755,715,780,737,805,761,860,786,920,809,965,832,995,854,1018,879,1035,901,1055,925,1072,950,1075,972,1074,997,1068,1018,1058,1043,1058,1065,1085,1090,1118,1114,1135,1136,1150,1160,1165,1183,1180,1207,1190,1229,1200,1254,1205,1278,1200,1300,1175,1325,1155,1347,1152,1371,1155,1394,1157,1418,1157,1442,1160,1464,1168,1489,1162,1511,1115,1535,1095,1557,1020,1568,985],
      w8: [0,990,36,860,58,800,81,745,102,670,126,600,147,585,170,592,194,602,215,655,238,740,259,810,283,860,304,890,327,965,350,1025,371,1075,395,1095,416,1125,439,1145,460,1155,484,1180,507,1215,528,1243,551,1253,573,1250,596,1233,618,1247,641,1253,663,1252,685,1257,708,1262,730,1270,753,1276,775,1276,797,1285,821,1325,842,1338,865,1335,887,1332,910,1318,931,1280,954,1245,978,1210,999,1185,1022,1145,1043,1110,1066,1065,1088,1010,1111,985,1134,945,1156,920,1179,895,1200,885,1223,850,1244,830,1268,815,1291,798,1312,785,1335,770,1357,760,1380,755,1400,745] },
    { color: '#e4e4e4', w7: [12,262,34,232,57,265,80,325,105,370,129,420,151,520,176,635,198,670,222,675,245,650,269,630,293,565,316,550,340,545,362,600,386,650,408,705,433,712,458,718,480,718,504,705,526,665,551,665,574,665,597,672,622,695,644,760,668,790,691,820,715,870,737,915,761,970,786,1050,809,1105,832,1115,854,1115,879,1100,901,1062,925,1045,950,1032,972,1033,997,1035,1018,1045,1043,1065,1065,1150,1090,1200,1114,1235,1136,1257,1160,1265,1183,1225,1207,1180,1229,1155,1254,1147,1278,1142,1300,1133,1325,1128,1347,1140,1371,1155,1394,1170,1418,1178,1442,1195,1464,1200,1489,1170,1511,1070,1535,1000,1557,900,1568,790],
      w8: [0,790,12,670,36,575,58,555,81,490,102,458,126,520,147,600,170,650,194,710,215,900,238,980,259,1020,283,1050,304,1070,327,1080,350,1095,371,1142,395,1145,416,1160,439,1212,460,1205,484,1205,507,1265,528,1295,551,1298,573,1296,596,1250,618,1225,641,1212,663,1200,685,1212,708,1275,730,1325,753,1342,775,1365,797,1385,821,1390,842,1355,865,1332,887,1310,910,1250,931,1170,954,1115,978,1085,999,1060,1022,1032,1043,1032,1066,1005,1088,975,1111,930,1134,860,1156,805,1179,792,1200,805,1223,797,1244,800,1268,828,1291,810,1312,780,1335,755,1357,720,1380,685,1400,680] },
    { color: '#0000e0', w7: [], w8: [730,930,780,938,830,944,900,950,1040,950,1250,952,1370,950,1400,947] }
  ];

  function poly(pts, color, w) {
    return '<polyline fill="none" stroke="' + color + '" stroke-width="' + (w || 1.3) + '" points="' + pts.join(' ') + '"/>';
  }
  function grid(y, x2) {
    return '<line x1="0" x2="' + (x2 || 1711) + '" y1="' + y + '" y2="' + y + '" stroke="' + GRID + '" stroke-width="1.5" stroke-dasharray="2 4"/>';
  }
  function rect(x, y, w, h, fill, stroke, sw) {
    return '<rect x="' + x + '" y="' + y + '" width="' + w + '" height="' + Math.max(h, 1) + '" fill="' + fill + '"' +
      (stroke ? ' stroke="' + stroke + '" stroke-width="' + (sw || 1.5) + '"' : '') + '/>';
  }
  function vline(x, y1, y2, color, w) {
    return '<line x1="' + x + '" x2="' + x + '" y1="' + y1 + '" y2="' + y2 + '" stroke="' + color + '" stroke-width="' + (w || 1.5) + '"/>';
  }

  /* main pane */
  var s = '';
  for (var g = 0; g < 8; g++) s += grid(99.8 + 92.3 * g);
  K.forEach(function (k, i) {
    var x = cx(i), c = k[0] === 'r' ? RED : k[0] === 'c' ? CYAN : '#f0f0f0';
    var h = Y(k[1]), t = Y(k[2]), b = Y(k[3]), l = Y(k[4]);
    if (b - t < 3) {
      s += vline(x, h, l, c) + '<line x1="' + (x - 5) + '" x2="' + (x + 5) + '" y1="' + t + '" y2="' + t + '" stroke="' + c + '" stroke-width="2"/>';
    } else if (k[0] === 'r') {
      s += vline(x, h, t, c) + vline(x, b, l, c) + rect(x - 4.5, t, 9, b - t, '#000', c);
    } else {
      s += vline(x, h, l, c) + rect(x - 5, t, 10, b - t, c);
    }
  });
  s += '<text class="wm-cn" x="897" y="708">公式在线</text><text class="wm-en" x="1039" y="707">www.gszx.com.cn</text>';
  MA.forEach(function (m) {
    var pts = [], j;
    for (j = 0; j < m.w7.length; j += 2) pts.push(X7(m.w7[j]).toFixed(1) + ',' + Y(m.w7[j + 1]).toFixed(1));
    for (j = 0; j < m.w8.length; j += 2) pts.push(X8(m.w8[j]).toFixed(1) + ',' + Y(m.w8[j + 1]).toFixed(1));
    s += poly(pts, m.color);
  });
  s += '<path d="M33 100 L19 102 M19 102 L24 99 M19 102 L23 106 M19 102 L19 116" stroke="#b0b0b0" fill="none" stroke-width="1"/>';
  s += '<text class="price-note" x="40" y="113">11.51</text>';
  s += '<path d="M1150 751 L1166 751 M1150 751 L1156 747 M1150 751 L1156 755" stroke="#b0b0b0" fill="none" stroke-width="1"/>';
  s += '<text class="price-note" x="1170" y="758">7.98</text>';
  s += '<path d="M55 759 L59 764 H51Z" fill="#e01010"/><text class="s-mark" x="55" y="779">S</text>';
  [[852, '张', '#781010'], [942, '榜', '#7c4c14'], [1289, '财', '#143c78'], [1432, '减', '#0c7a14']].forEach(function (b) {
    s += rect(b[0] - 9, 760, 19, 20, b[2]) + '<text class="badge" x="' + (b[0] + .5) + '" y="776">' + b[1] + '</text>';
  });
  document.getElementById('chart-main').innerHTML = s;

  /* indicator pane: index, colour, top, box top, box bottom, fill bottom, stem bottom (zoom y, page y = 780 + z / 3) */
  var IND = [
    [41,'g',530,728,790,838,846],[42,'g',490,710,775,830,838],[43,'g',512,720,785,832,842],[44,'g',575,750,808,850,856],
    [56,'g',570,750,808,848,856],[57,'g',557,742,804,845,850],
    [66,'y',570,750,808,848,856],[67,'y',350,638,732,802,810],[68,'y',175,552,672,762,775],[69,'y',110,522,655,750,766],
    [70,'y',97,512,650,745,760],[71,'y',192,558,677,768,778],[72,'y',380,657,745,805,820],[73,'y',548,738,798,842,850],
    [108,'g',557,740,797,846,850],[109,'g',345,637,730,797,810],[110,'g',180,552,676,762,775],[111,'g',93,511,645,745,762],
    [112,'g',92,508,645,745,758],[113,'g',215,570,685,770,784],[114,'y',378,652,740,805,815],[115,'y',508,718,785,832,842]
  ];
  var Z = function (z) { return 780 + z / 3; };
  s = '';
  [826, 879, 931, 984, 1034].forEach(function (y) { s += grid(y); });
  for (var d = 0; d < 133; d++) {
    if ((d >= 65 && d <= 73) || (d >= 107 && d <= 116)) continue;
    s += rect(cx(d) - 1, 1083, 2, 2, '#d8c800');
  }
  IND.forEach(function (b) {
    var x = cx(b[0]), c = b[1] === 'g' ? '#00ff00' : '#ffff00';
    s += vline(x, Z(b[2]), Z(b[3]), c, 4) + vline(x, Z(b[5]), Z(b[6]), c, 4);
    s += rect(x - 8, Z(b[4]), 16, Z(b[5]) - Z(b[4]), c);
    s += rect(x - 6, Z(b[3]), 12, Z(b[4]) - Z(b[3]), '#000', c, 2);
  });
  document.getElementById('chart-ind').innerHTML = s;

  /* volume pane */
  var VZ = [
    'r395','r265','r377','c390','c430','r413','c430','c448','r481','r445','r363','c398','r445','c457','r485','c461','c493','r490','r452','r458',
    'c470','c457','r390','c470','r498','c480','c511','c515','r525','r515','c503','r498','c512','c497','r525','r520','r525','r520','r520','r535',
    'r520','c523','c511','c523','c533','c507','c528','r516','r535','r535','r532','c542','r540','r540','c537','r540','c541','c533','c541','r540',
    'r540','c515','r533','r445','r355','c393','r242','r97','r242','r345','r355','r255','c348','c367','r413','c470','c447','c480'
  ];
  var VH = 'r30 r28 r22 c30 c36 c28 r42 c30 c34 r20 c30 c16 r12 r16 r20 r24 c18 c14 r12 c14 c20 c18 r14 r20 c30 r14 r20 r22 r24 r18 r26 c20 r16 r14 c26 c18 r22 r30 r22 r18 r16 c18 c20 r18 c18 c26 r22 c18 r28 c24 c24 r12'.split(' ');
  var V = function (z) { return 1090 + z / 3; };
  s = grid(1171) + grid(1225);
  function volBar(i, t, top) {
    var x = cx(i);
    s += t === 'r' ? rect(x - 4.5, top, 9, 1279 - top, '#000', RED) : rect(x - 5, top, 10, 1279 - top, CYAN);
  }
  VZ.forEach(function (v, i) { volBar(i, v[0], V(+v.slice(1))); });
  VH.forEach(function (v, i) { volBar(78 + i, v[0], 1279 - (+v.slice(1))); });

  function volLine(a, tail, color) {
    var pts = [], j;
    for (j = 0; j < a.length; j += 2) pts.push((a[j] / 1.568).toFixed(1) + ',' + V(a[j + 1]).toFixed(1));
    for (j = 0; j < tail.length; j += 2) pts.push((tail[j] * 1.3776).toFixed(1) + ',' + (tail[j + 1] * 1.3776).toFixed(1));
    s += poly(pts, color, 1.6);
  }
  volLine([10,245,22,275,50,335,90,372,110,378,130,410,155,425,180,445,210,435,230,427,270,423,295,435,335,473,380,478,420,473,450,448,490,458,520,462,550,490,580,510,620,515,660,515,690,518,780,520,800,527,830,527,950,520,1010,530,1050,538,1230,540,1270,530,1310,465,1330,420,1350,330,1380,268,1405,266,1425,257,1445,262,1480,340,1520,370,1568,445],
    [730,895,760,905,800,910,850,912,1000,915,1100,916,1180,910,1207,915], '#e4e4e4');
  volLine([10,305,40,303,70,306,90,315,115,317,150,375,190,408,210,405,240,425,280,430,345,455,395,450,420,465,480,465,540,468,600,490,640,497,660,507,720,515,830,522,960,522,1060,532,1120,538,1250,540,1300,510,1340,430,1380,385,1430,345,1465,310,1480,300,1520,312,1568,380],
    [740,895,780,908,850,912,1000,915,1100,916,1180,912,1207,913], '#d8d800');
  document.getElementById('chart-vol').innerHTML = s;

  /* tick list */
  var T = [
    ['11:14','9.95','0.1','S','1'],['11:14','9.95','0.1','S','1'],['11:14','9.95','0.1','S','1'],['11:15','9.95','1.2','S','4'],
    ['11:15','9.96','9.8','B','19'],['11:15','9.97','2.2','B','12'],['11:15','9.95','0.1','S','1'],['11:15','9.95','1.3','S','4'],
    ['11:16','9.96','0.3','','3'],['11:16','9.97','0.1','B','1'],['11:16','9.95','0.1','S','1'],['11:16','9.96','0.1','S','1'],
    ['11:17','9.97','0.2','B','1'],['11:17','9.95','1.0','S','2'],['11:17','9.96','1.0','B','4'],['11:17','9.95','0.2','S','2'],
    ['11:17','9.96','0.2','B','1'],['11:17','9.96','1.8','B','1'],['11:17','9.96','1.3','S','2'],['11:17','9.96','0.2','S','2'],
    ['11:17','9.96','0.2','B','2']
  ];
  document.getElementById('ticks').innerHTML = T.map(function (r) {
    return '<div class="t-row"><span class="gr">' + r[0] + '</span><span class="red">' + r[1] + '</span><span>' + r[2] + '<u>万</u></span>' +
      '<span class="' + (r[3] === 'S' ? 't-s' : 't-b') + '">' + r[3] + '</span><span class="gr">' + r[4] + '</span></div>';
  }).join('');
})();
```
